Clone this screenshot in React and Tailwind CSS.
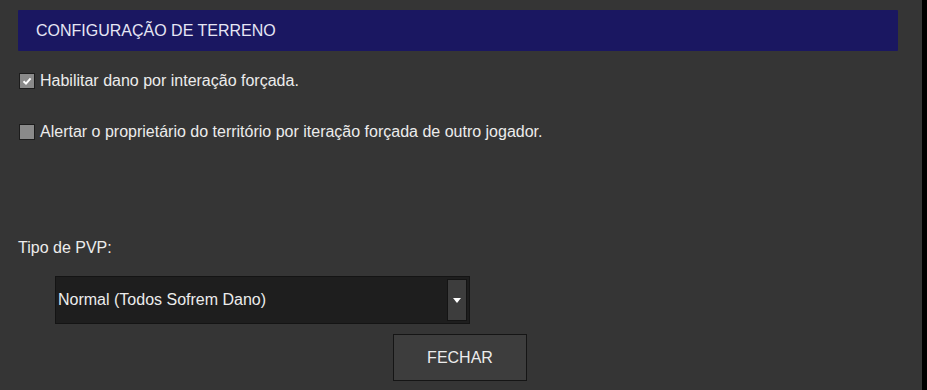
import React, { useState } from "react";

const Checkbox = ({ checked, onChange, label }) => (
  <label className="flex items-center gap-[5px] cursor-pointer select-none">
    <span
      onClick={onChange}
      className="w-[16px] h-[16px] shrink-0 border border-[#1c1c1c] bg-[#8a8a8a] flex items-center justify-center"
    >
      {checked && (
        <svg width="10" height="10" viewBox="0 0 10 10">
          <path d="M1.5 5.2 L4 7.6 L8.6 2.4" stroke="#ffffff" strokeWidth="2" fill="none" />
        </svg>
      )}
    </span>
    <span className="text-[16px] leading-[24px] text-[#ececec]">{label}</span>
  </label>
);

export default function App() {
  const [dano, setDano] = useState(true);
  const [alerta, setAlerta] = useState(false);

  return (
    <div
      className="w-[927px] h-[390px] flex bg-black overflow-hidden"
      style={{ fontFamily: '"Liberation Sans", Arial, sans-serif' }}
    >
      <div className="w-[922px] h-full bg-[#353535] flex flex-col pt-[10px] pl-[18px] pr-[24px]">
        <div className="shrink-0 h-[41px] bg-[#1a1761] flex items-center pl-[18px] rounded-[1px]">
          <span className="text-[16px] text-[#e6e6f4]">CONFIGURAÇÃO DE TERRENO</span>
        </div>

        <div className="shrink-0 mt-[18px] pl-[1px]">
          <Checkbox
            checked={dano}
            onChange={() => setDano(!dano)}
            label="Habilitar dano por interação forçada."
          />
        </div>
        <div className="shrink-0 mt-[27px] pl-[1px]">
          <Checkbox
            checked={alerta}
            onChange={() => setAlerta(!alerta)}
            label="Alertar o proprietário do território por iteração forçada de outro jogador."
          />
        </div>

        <div className="shrink-0 mt-[92px] text-[16px] leading-[24px] text-[#ececec]">Tipo de PVP:</div>

        <div className="shrink-0 mt-[16px] ml-[37px] w-[415px] h-[48px] bg-[#1e1e1e] border border-[#141414] flex items-center justify-between pr-[2px]">
          <span className="pl-[2px] text-[16px] text-[#ececec]">Normal (Todos Sofrem Dano)</span>
          <span className="w-[20px] h-[42px] bg-[#3d3d3d] border border-[#141414] flex items-center justify-center">
            <svg width="8" height="5" viewBox="0 0 8 5">
              <path d="M0 0 H8 L4 5 Z" fill="#ffffff" />
            </svg>
          </span>
        </div>

        <div className="shrink-0 mt-[10px] ml-[375px]">
          <button className="w-[134px] h-[47px] bg-[#3d3d3d] border border-[#151515] text-[16px] text-[#ececec]">
            FECHAR
          </button>
        </div>
      </div>
    </div>
  );
}
